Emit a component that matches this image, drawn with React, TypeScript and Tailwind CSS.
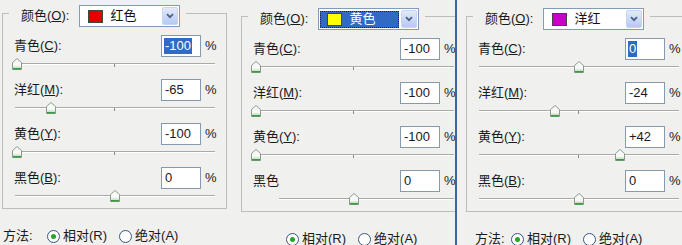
import React from "react";

type Row = { name: string; key?: string; value: string; v: number; selected?: boolean; inset?: boolean };
type Panel = {
  col: string;
  pad: string;
  swatch: string;
  color: string;
  focused: boolean;
  rows: Row[];
  method: boolean;
  methodPad: string;
};

const panels: Panel[] = [
  {
    col: "w-[227px]",
    pad: "pl-[2px] pt-[13px]",
    swatch: "#e00000",
    color: "红色",
    focused: false,
    rows: [
      { name: "青色", key: "C", value: "-100", v: -100, selected: true },
      { name: "洋红", key: "M", value: "-65", v: -65 },
      { name: "黄色", key: "Y", value: "-100", v: -100 },
      { name: "黑色", key: "B", value: "0", v: 0 },
    ],
    method: true,
    methodPad: "pl-[1px]",
  },
  {
    col: "w-[228px]",
    pad: "pl-[14px] pt-[16px]",
    swatch: "#ffff00",
    color: "黄色",
    focused: true,
    rows: [
      { name: "青色", key: "C", value: "-100", v: -100 },
      { name: "洋红", key: "M", value: "-100", v: -100 },
      { name: "黄色", key: "Y", value: "-100", v: -100 },
      { name: "黑色", value: "0", v: 0, inset: true },
    ],
    method: false,
    methodPad: "pl-[1px]",
  },
  {
    col: "flex-1",
    pad: "pl-[9px] pt-[16px]",
    swatch: "#c800c8",
    color: "洋红",
    focused: false,
    rows: [
      { name: "青色", key: "C", value: "0", v: 0, selected: true },
      { name: "洋红", key: "M", value: "-24", v: -24 },
      { name: "黄色", key: "Y", value: "+42", v: 42 },
      { name: "黑色", key: "B", value: "0", v: 0 },
    ],
    method: true,
    methodPad: "pl-[9px]",
  },
];

function Thumb({ v }: { v: number }) {
  const left = 2 + ((v + 100) / 200) * 196 - 5;
  return (
    <svg className="absolute top-0" style={{ left }} width="10" height="12" viewBox="0 0 10 12">
      <path d="M0.5 4.5 L5 0.5 L9.5 4.5 V11.5 H0.5 Z" fill="#f7f9f7" stroke="#8f9a8f" />
      <path d="M1 10.7 H9" stroke="#3a9a44" strokeWidth="1.6" />
      <path d="M1.2 9 H8.8" stroke="#b9dcb9" strokeWidth="1" />
    </svg>
  );
}

function Slider({ v, inset }: { v: number; inset?: boolean }) {
  return (
    <div className="relative mt-[1px] ml-[12px] h-[12px] w-[200px]">
      <div className={inset ? "mt-[5px] ml-[25px] h-px bg-[#a9a9a9]" : "mt-[5px] h-px bg-[#a9a9a9]"} />
      <div className={inset ? "ml-[25px] h-px bg-white" : "h-px bg-white"} />
      <div className="absolute left-[99px] top-[6px] h-[3px] w-px bg-[#8a8a8a]" />
      <Thumb v={v} />
    </div>
  );
}

function Label({ name, k }: { name: string; k?: string }) {
  return (
    <span>
      {name}
      {k ? (
        <>
          (<u>{k}</u>):
        </>
      ) : null}
    </span>
  );
}

function Dropdown({ swatch, color, focused }: { swatch: string; color: string; focused: boolean }) {
  return (
    <div className="flex h-[22px] w-[101px] items-center border border-[#7f9db9] bg-white p-[1px]">
      <div
        className={
          focused
            ? "flex h-[17px] flex-1 items-center gap-[7px] border border-dotted border-[#222] bg-[#316ac5] pl-[6px] text-white"
            : "flex h-[17px] flex-1 items-center gap-[7px] pl-[7px] text-[#111]"
        }
      >
        <div className="h-[13px] w-[15px] border border-[#444]" style={{ backgroundColor: swatch }} />
        <span>{color}</span>
      </div>
      <div className="ml-[2px] flex h-[18px] w-[16px] items-center justify-center rounded-[2px] border border-[#c5d5f5] bg-gradient-to-b from-[#e2ebfd] to-[#b6c9f2]">
        <svg width="8" height="6" viewBox="0 0 8 6">
          <path d="M1 1.2 L4 4.2 L7 1.2" fill="none" stroke="#4d5f86" strokeWidth="1.8" />
        </svg>
      </div>
    </div>
  );
}

function Radio({ on }: { on: boolean }) {
  return (
    <div className="flex h-[13px] w-[13px] items-center justify-center rounded-full border border-[#37577d] bg-white">
      {on ? <div className="h-[5px] w-[5px] rounded-full bg-[#2aa32a]" /> : null}
    </div>
  );
}

function PanelView({ p }: { p: Panel }) {
  return (
    <div className={`${p.col} ${p.pad} shrink-0 overflow-hidden`}>
      <div className="flex w-[225px] flex-col border border-[#bdbdbd] pb-[6px]">
        <div className="-mt-[9px] ml-[6px] flex items-center gap-[10px] self-start bg-[#f0f0ee] pl-[12px] pr-[6px]">
          <Label name="颜色" k="O" />
          <Dropdown swatch={p.swatch} color={p.color} focused={p.focused} />
        </div>
        <div className="mt-[8px] flex flex-col gap-[9px]">
          {p.rows.map((r, i) => (
            <div key={i} className="flex flex-col">
              <div className="flex h-[22px] items-center">
                <div className="ml-[11px] w-[147px]">
                  <Label name={r.name} k={r.key} />
                </div>
                <div className="flex h-[22px] w-[40px] items-center border border-[#8599b0] bg-white pl-[3px]">
                  {r.selected ? (
                    <span className="-ml-[1px] bg-[#316ac5] px-[1px] leading-[16px] text-white">{r.value}</span>
                  ) : (
                    <span>{r.value}</span>
                  )}
                </div>
                <span className="ml-[4px]">%</span>
              </div>
              <Slider v={r.v} inset={r.inset} />
            </div>
          ))}
        </div>
      </div>
      <div className="mt-[19px] flex items-center">
        <div className={`w-[45px] shrink-0 ${p.methodPad}`}>{p.method ? "方法:" : ""}</div>
        <Radio on={true} />
        <span className="ml-[3px]">相对(R)</span>
        <div className="ml-[12px]">
          <Radio on={false} />
        </div>
        <span className="ml-[3px]">绝对(A)</span>
      </div>
    </div>
  );
}

export default function App() {
  return (
    <div className="flex h-[245px] w-[682px] overflow-hidden bg-[#f0f0ee] font-[family-name:'Liberation_Sans','Noto_Sans_CJK_SC',sans-serif] text-[13px] leading-[16px] text-[#1a1a1a]">
      <PanelView p={panels[0]} />
      <PanelView p={panels[1]} />
      <div className="w-[2px] shrink-0 bg-[#3a66a0]" />
      <PanelView p={panels[2]} />
    </div>
  );
}
